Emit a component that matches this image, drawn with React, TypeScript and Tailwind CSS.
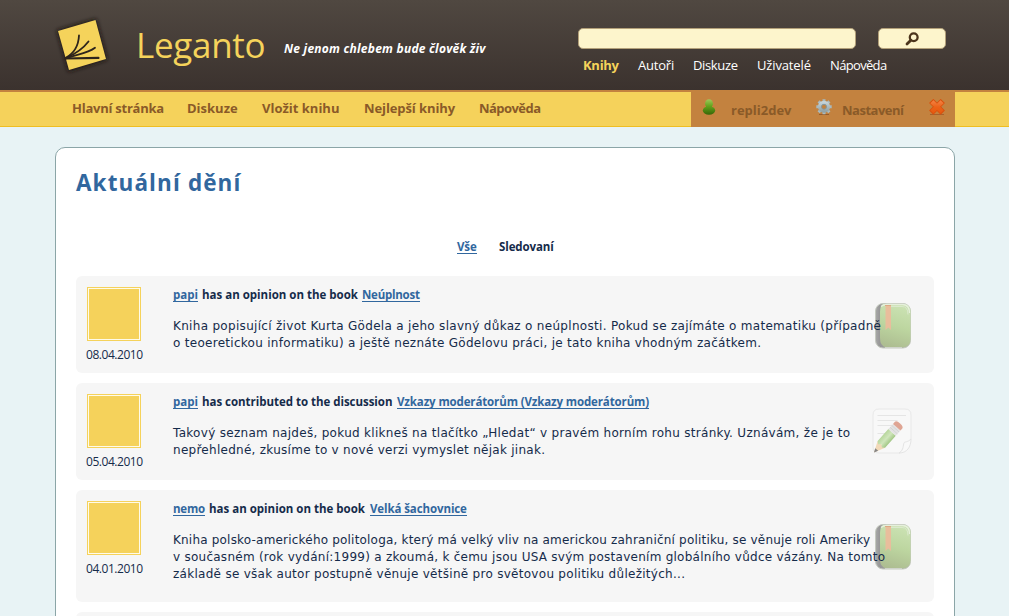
import type { ReactNode } from "react";

function Logo() {
  return (
    <svg className="ml-[49px] mt-[11px] h-[68px] w-[68px] shrink-0" viewBox="0 0 68 68">
      <defs>
        <filter id="logoShadow" x="-30%" y="-30%" width="160%" height="160%">
          <feGaussianBlur stdDeviation="2" />
        </filter>
      </defs>
      <path d="M9 20 46.5 9 57 48 20 59.5Z" fill="#1d1712" stroke="#1d1712" strokeWidth="2" filter="url(#logoShadow)" />
      <path d="M9 20 46.5 9 57 48 20 59Z" fill="#f5d35b" />
      <g fill="none" stroke="#2d241c" strokeLinecap="round">
        <path d="M16.5 47.5 49.5 46.9" strokeWidth="2.1" />
        <path d="M16.5 47C24 43 29.5 35 30 24.5" strokeWidth="1.8" />
        <path d="M17 47C25 43.5 33 39 39.5 30.5" strokeWidth="1.8" />
        <path d="M17 47.5C26 43.5 38 43 46 36.8" strokeWidth="1.8" />
      </g>
    </svg>
  );
}

function SearchIcon() {
  return (
    <svg className="-ml-px h-[14px] w-[14px]" viewBox="0 0 14 14" fill="none" stroke="#4c351c">
      <circle cx="8.7" cy="5.2" r="3.9" strokeWidth="2.3" />
      <path d="M5.8 8.2 2 12" strokeWidth="2.8" strokeLinecap="round" />
    </svg>
  );
}

function UserIcon() {
  return (
    <svg className="h-4 w-[14px] shrink-0" viewBox="0 0 14 16">
      <defs>
        <linearGradient id="userGreen" gradientUnits="userSpaceOnUse" x1="0" y1="0" x2="0" y2="16">
          <stop offset="0" stopColor="#a3c95c" />
          <stop offset=".45" stopColor="#62a31c" />
          <stop offset="1" stopColor="#356407" />
        </linearGradient>
      </defs>
      <g fill="url(#userGreen)">
        <ellipse cx="7" cy="11.5" rx="6.2" ry="4.2" />
        <ellipse cx="7" cy="4.6" rx="4" ry="4.3" />
        <path d="M4 6h6v3H4Z" />
      </g>
    </svg>
  );
}

function GearIcon() {
  return (
    <svg className="h-4 w-4 shrink-0" viewBox="0 0 16 16">
      <defs>
        <linearGradient id="gearGray" x1="0" y1="0" x2="0" y2="1">
          <stop offset="0" stopColor="#c3d2d8" />
          <stop offset="1" stopColor="#93a3a6" />
        </linearGradient>
      </defs>
      <path d="M3 15.5h10" stroke="#965b29" strokeWidth="1" />
      <path
        d="M8 .3v15M.3 7.8h15.4M2.6 2.4l10.8 10.8M13.4 2.4 2.6 13.2"
        stroke="#a9babf"
        strokeWidth="3"
      />
      <circle cx="8" cy="7.8" r="4.4" fill="none" stroke="url(#gearGray)" strokeWidth="3.4" />
      <circle cx="8" cy="7.8" r="2.5" fill="#c3823f" stroke="#84979d" strokeWidth="1" />
    </svg>
  );
}

function CloseIcon() {
  return (
    <svg className="h-[17px] w-4 shrink-0" viewBox="0 0 16 17">
      <defs>
        <linearGradient id="closeOrange" gradientUnits="userSpaceOnUse" x1="0" y1="0" x2="0" y2="16">
          <stop offset="0" stopColor="#f58a4e" />
          <stop offset=".5" stopColor="#ec6218" />
          <stop offset="1" stopColor="#e4570c" />
        </linearGradient>
      </defs>
      <path d="M1 15.5h14" stroke="#a8602c" strokeWidth="1" />
      <path d="M2.2 2 13.8 13.600M13.8 2 2.2 13.600" stroke="#d9500c" strokeWidth="6" />
      <path d="M2.900 2.700 13.100 12.900M13.100 2.700 2.900 12.900" stroke="url(#closeOrange)" strokeWidth="4.400" />
    </svg>
  );
}

function BookIcon() {
  return (
    <svg className="h-[46px] w-9" viewBox="0 0 36 46">
      <defs>
        <linearGradient id="bookCover" x1=".6" y1="0" x2=".4" y2="1">
          <stop offset="0" stopColor="#cbe2b3" />
          <stop offset=".5" stopColor="#bdd6a0" />
          <stop offset="1" stopColor="#adbd91" />
        </linearGradient>
        <linearGradient id="bookSpine" x1="0" x2="1">
          <stop offset="0" stopColor="#a9a9a9" />
          <stop offset=".12" stopColor="#979797" />
          <stop offset="1" stopColor="#b5b5b5" />
        </linearGradient>
      </defs>
      <rect x=".5" y=".5" width="35" height="44.5" rx="7.5" fill="url(#bookSpine)" stroke="#c4c9be" />
      <path d="M8 1h20q7.5 0 7.5 8v27q0 8-8 8.500H11Q5 43 5 35V9Q5 3 8 1Z" fill="url(#bookCover)" />
      <path d="M6 3.500Q8 1.500 12 1.500H28Q34.500 2 34.500 10" fill="none" stroke="#e6f0dc" strokeWidth="1.3" />
      <path d="M16 3.500h11q6 0 6 8" fill="none" stroke="#dbe9cd" strokeWidth="1" />
      <path d="M10.500 2.500h5.500V27l-2.700-2.500L10.500 27Z" fill="#e9bd9c" />
      <path d="M10 2.500h6" stroke="#dda983" />
      <path d="M10 44.500h17" stroke="#cfd3ca" />
    </svg>
  );
}

function NoteIcon() {
  return (
    <svg className="h-[46px] w-10" viewBox="0 0 40 46">
      <defs>
        <linearGradient id="pencilGreen" x1="0" y1="0" x2="1" y2="0">
          <stop offset="0" stopColor="#b7d69c" />
          <stop offset=".5" stopColor="#d0e6bc" />
          <stop offset="1" stopColor="#a2c785" />
        </linearGradient>
      </defs>
      <path d="M7 1h26q6 0 6 6v24L28 45H7q-6 0-6-6V7q0-6 6-6Z" fill="#f8f8f8" stroke="#e8e8e8" />
      <path d="M39 31c-4 4-6 2-7 4s0 7-5 10c8 0 12-6 12-14Z" fill="#f9f9f9" stroke="#e4e4e4" />
      <path d="M5.500 7.500h28.500M5.500 12.500h20M5.500 17.500h16M5.500 25.500h9" stroke="#e5e5e5" />
      <g transform="translate(2 44.500) rotate(42)">
        <path d="M0 0-5-11H5Z" fill="#f2d9b8" />
        <path d="M0 0-2-4H2Z" fill="#858585" />
        <path d="M-5-11-5-27H5L5-11 2.500-9 0-11-2.500-9Z" fill="url(#pencilGreen)" />
        <path d="M-5-34H5v7H-5Z" fill="#e3e3e3" />
        <path d="M-5-32H5M-5-29.500H5" stroke="#cfcfcf" strokeWidth=".7" />
        <path d="M-5-34v-2.500q0-2.500 5-2.500t5 2.500v2.500Z" fill="#dfa594" />
      </g>
    </svg>
  );
}

function Link({ className, children }: { className: string; children: ReactNode }) {
  return (
    <a href="#" className={`inline-block h-[14px] border-b border-[#31679e] text-[#31679e] ${className}`}>
      {children}
    </a>
  );
}

interface EntryProps {
  size: string;
  date: string;
  title: ReactNode;
  icon: ReactNode;
  iconPlace: string;
  lines: { text: string; tracking: string }[];
}

function Entry({ size, date, title, icon, iconPlace, lines }: EntryProps) {
  return (
    <article className={`relative flex rounded-md bg-[#f6f6f6] ${size}`}>
      <div className={`absolute ${iconPlace}`}>{icon}</div>
      <div className="w-[97px] shrink-0 pl-[11px] pt-[11px]">
        <div className="h-[54px] w-[54px] border border-[#f5d25b] bg-[#fffbe9] p-px">
          <div className="h-full bg-[#f5d25b]" />
        </div>
        <div className="-ml-px mt-[6px] text-[12px] leading-4 tracking-[-0.46px]">{date}</div>
      </div>
      <div className="relative">
        <div className="mt-3 flex h-4 items-start whitespace-nowrap text-[11.5px] font-bold leading-[14px]">{title}</div>
        <div className="mt-[14px] whitespace-nowrap font-['DejaVu_Sans',sans-serif] text-[12px] leading-[17px]">
          {lines.map((line) => (
            <p key={line.text} className={line.tracking}>
              {line.text}
            </p>
          ))}
        </div>
      </div>
    </article>
  );
}

export default function App() {
  return (
    <div className="h-[616px] w-[1009px] overflow-hidden whitespace-nowrap bg-[#e8f3f5] font-['Open_Sans',sans-serif] text-[#152b4a]">
      <header className="flex h-[90px] bg-linear-to-b from-[#504841] to-[#3b322e]">
        <Logo />
        <h1 className="ml-[19px] mt-[21px] w-[148px] text-[35px] font-medium leading-[48px] tracking-[-0.3px] text-[#f5d35b]">
          Leganto
        </h1>
        <p className="mt-10 w-[294px] text-[12px] font-bold italic leading-[18px] tracking-[0.24px] text-white">
          Ne jenom chlebem bude člověk živ
        </p>
        <div className="pt-7">
          <div className="flex gap-[22px]">
            <input
              aria-label="search"
              className="h-[21px] w-[278px] rounded-[5px] border border-[#b3a079] bg-[#fdf5cc] outline-none"
            />
            <button className="flex h-[21px] w-[68px] items-center justify-center rounded-[5px] border border-[#b3a079] bg-[#fdf5cc]">
              <SearchIcon />
            </button>
          </div>
          <nav className="ml-[5px] mt-[7px] flex text-[13px] leading-[18px] text-white">
            <b className="w-[55px] tracking-[-0.27px] text-[#f5d35b]">Knihy</b>
            <span className="w-[55px] tracking-[-0.2px]">Autoři</span>
            <span className="w-16 tracking-[-0.35px]">Diskuze</span>
            <span className="w-[73px] tracking-[-0.14px]">Uživatelé</span>
            <span className="tracking-[-0.66px]">Nápověda</span>
          </nav>
        </div>
      </header>

      <div className="flex h-[37px] border-b border-t-2 border-b-[#efbe22] border-t-[#c3823f] bg-[#f5d25b] text-[13px] font-bold text-[#8a5a28]">
        <nav className="flex w-[691px] pl-[72px] pt-[7px] leading-[18px]">
          <span className="w-[115px] tracking-[-0.25px]">Hlavní stránka</span>
          <span className="w-[75px]">Diskuze</span>
          <span className="w-[102px]">Vložit knihu</span>
          <span className="w-[115px] tracking-[-0.1px]">Nejlepší knihy</span>
          <span className="tracking-[-0.55px]">Nápověda</span>
        </nav>
        <div className="-mb-px flex w-[264px] bg-[#c3823f] pl-[11px] pt-[7px] leading-[18px]">
          <UserIcon />
          <span className="ml-[15px] mt-[2px] w-[85px]">repli2dev</span>
          <GearIcon />
          <span className="ml-[10px] mt-[2px] w-[87px] tracking-[-0.5px]">Nastavení</span>
          <CloseIcon />
        </div>
      </div>

      <main className="ml-[55px] mt-5 h-[500px] w-[900px] rounded-t-[10px] border border-[#8ba5a7] bg-white px-5">
        <h2 className="pt-[19px] text-[22.5px] font-bold leading-8 tracking-[1.1px] text-[#31679e]">Aktuální dění</h2>
        <div className="mt-[41px] flex h-4 pl-[381px] text-[11.5px] font-bold leading-[14px]">
          <Link className="mr-[22px] w-5 tracking-[-0.1px]">Vše</Link>
          <span className="tracking-[-0.1px]">Sledovaní</span>
        </div>
        <div className="mt-5 flex flex-col gap-[10px]">
          <Entry
            size="h-[97px]"
            date="08.04.2010"
            icon={<BookIcon />}
            iconPlace="left-[799px] top-[27px]"
            title={
              <>
                <Link className="w-[25px]">papi</Link>
                <span className="ml-1 w-40">has an opinion on the book</span>
                <Link className="w-[58px] tracking-[-0.24px]">Neúplnost</Link>
              </>
            }
            lines={[
              {
                text: "Kniha popisující život Kurta Gödela a jeho slavný důkaz o neúplnosti. Pokud se zajímáte o matematiku (případně",
                tracking: "tracking-[0.308px]",
              },
              {
                text: "o teoeretickou informatiku) a ještě neznáte Gödelovu práci, je tato kniha vhodným začátkem.",
                tracking: "tracking-[0.287px]",
              },
            ]}
          />
          <Entry
            size="h-[97px]"
            date="05.04.2010"
            icon={<NoteIcon />}
            iconPlace="left-[796px] top-[25px]"
            title={
              <>
                <Link className="w-[25px]">papi</Link>
                <span className="ml-1 w-[195px] tracking-[-0.03px]">has contributed to the discussion</span>
                <Link className="w-[252px] tracking-[-0.13px]">Vzkazy moderátorům (Vzkazy moderátorům)</Link>
              </>
            }
            lines={[
              {
                text: "Takový seznam najdeš, pokud klikneš na tlačítko „Hledat“ v pravém horním rohu stránky. Uznávám, že je to",
                tracking: "tracking-[0.298px]",
              },
              { text: "nepřehledné, zkusíme to v nové verzi vymyslet nějak jinak.", tracking: "tracking-[0.274px]" },
            ]}
          />
          <Entry
            size="h-[112px]"
            date="04.01.2010"
            icon={<BookIcon />}
            iconPlace="left-[799px] top-[34px]"
            title={
              <>
                <Link className="w-8 tracking-[-0.2px]">nemo</Link>
                <span className="ml-1 w-[161px]">has an opinion on the book</span>
                <Link className="w-[97px] tracking-[-0.1px]">Velká šachovnice</Link>
              </>
            }
            lines={[
              {
                text: "Kniha polsko-amerického politologa, který má velký vliv na americkou zahraniční politiku, se věnuje roli Ameriky",
                tracking: "tracking-[0.197px]",
              },
              {
                text: "v současném (rok vydání:1999) a zkoumá, k čemu jsou USA svým postavením globálního vůdce vázány. Na tomto",
                tracking: "tracking-[0.258px]",
              },
              {
                text: "základě se však autor postupně věnuje většině pro světovou politiku důležitých...",
                tracking: "tracking-[0.284px]",
              },
            ]}
          />
          <div className="h-24 rounded-md bg-[#f6f6f6]" />
        </div>
      </main>
    </div>
  );
}
